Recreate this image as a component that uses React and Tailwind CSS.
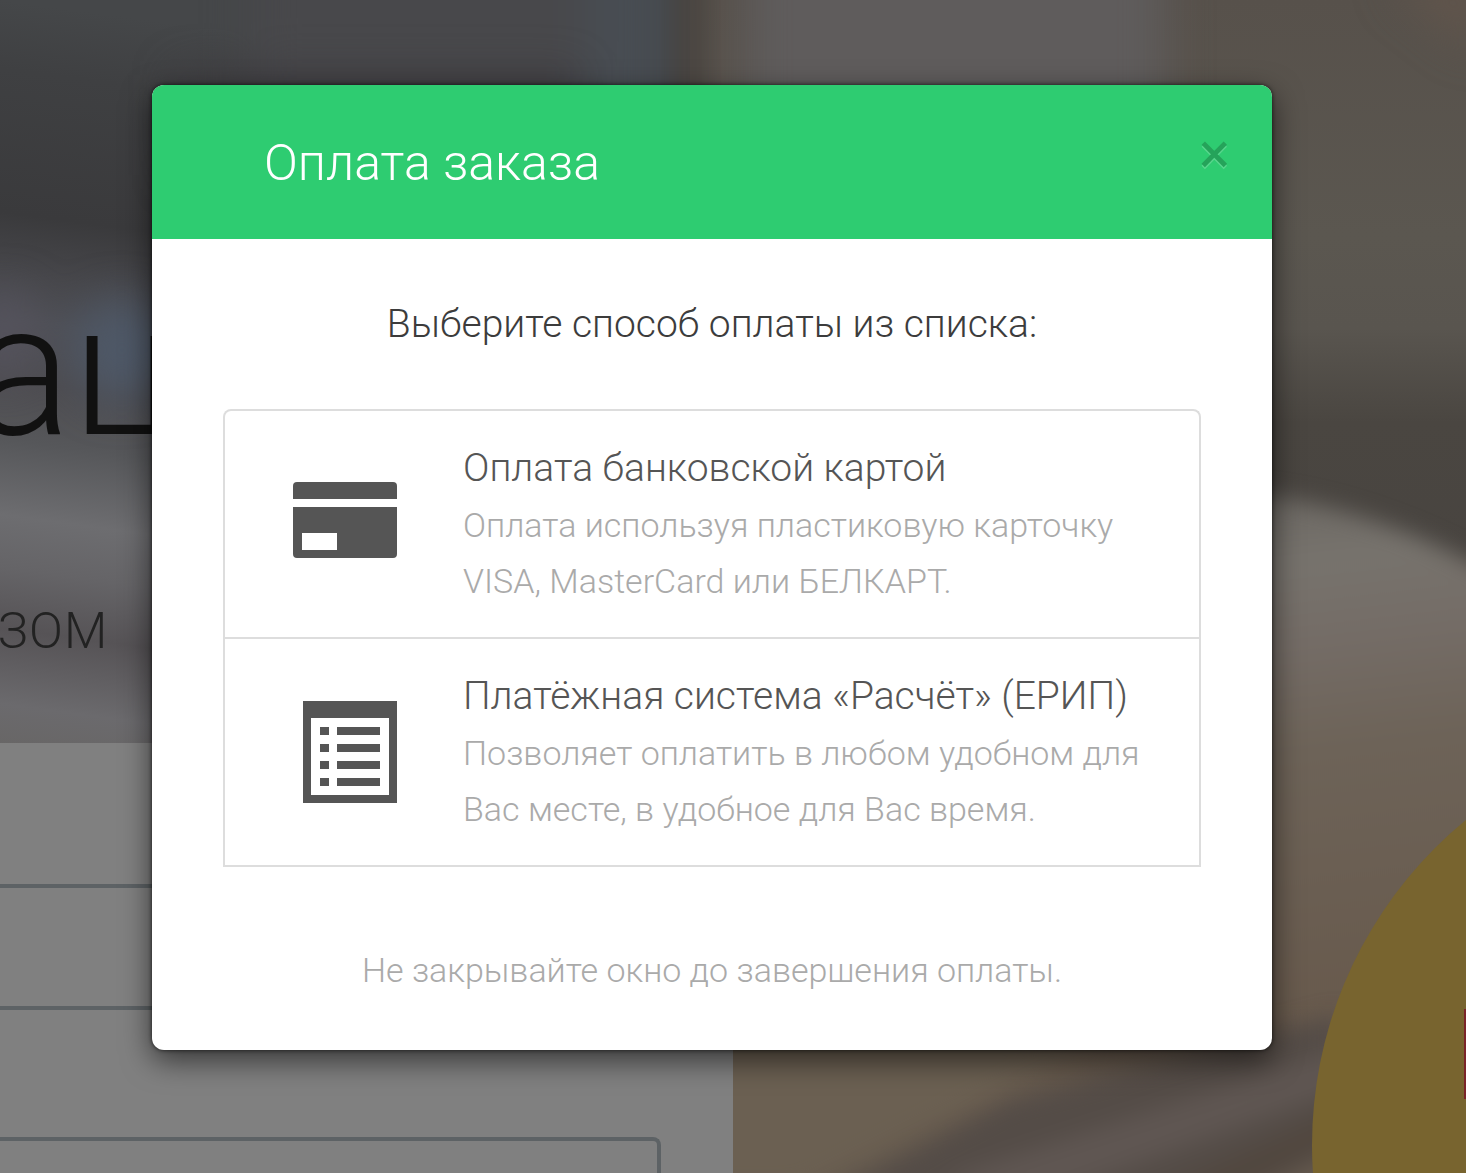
import React from 'react';

function Backdrop() {
  return (
    <svg
      aria-hidden="true"
      className="absolute inset-0 h-full w-full"
      viewBox="0 0 1466 1173"
      preserveAspectRatio="xMidYMid slice"
    >
      <defs>
        <filter id="soft" x="-50%" y="-50%" width="200%" height="200%" colorInterpolationFilters="sRGB">
          <feGaussianBlur stdDeviation="22" />
        </filter>
        <filter id="fine" x="-50%" y="-50%" width="200%" height="200%" colorInterpolationFilters="sRGB">
          <feGaussianBlur stdDeviation="11" />
        </filter>
        <linearGradient id="left" x1="0" y1="0" x2="-100" y2="743" gradientUnits="userSpaceOnUse">
          <stop offset="0" stopColor="#454749" />
          <stop offset="0.09" stopColor="#3f4042" />
          <stop offset="0.28" stopColor="#3a3a3c" />
          <stop offset="0.36" stopColor="#47474b" />
          <stop offset="0.42" stopColor="#4e4f55" />
          <stop offset="0.5" stopColor="#4d4c50" />
          <stop offset="0.58" stopColor="#56575a" />
          <stop offset="0.68" stopColor="#6d6d70" />
          <stop offset="0.75" stopColor="#656467" />
          <stop offset="0.83" stopColor="#565356" />
          <stop offset="0.93" stopColor="#6b6a6d" />
          <stop offset="1" stopColor="#676564" />
        </linearGradient>
        <linearGradient id="right" x1="0" y1="0" x2="0" y2="1173" gradientUnits="userSpaceOnUse">
          <stop offset="0" stopColor="#57514b" />
          <stop offset="0.2" stopColor="#5b5750" />
          <stop offset="0.28" stopColor="#59554f" />
          <stop offset="0.36" stopColor="#4a4641" />
          <stop offset="0.5" stopColor="#484440" />
          <stop offset="0.7" stopColor="#6c6256" />
          <stop offset="0.88" stopColor="#685a4d" />
          <stop offset="1" stopColor="#655a4e" />
        </linearGradient>
        <linearGradient id="cup" x1="1270" y1="490" x2="1330" y2="1010" gradientUnits="userSpaceOnUse">
          <stop offset="0" stopColor="#6a6661" />
          <stop offset="0.14" stopColor="#77736d" />
          <stop offset="0.3" stopColor="#746c66" />
          <stop offset="0.5" stopColor="#6d6358" />
          <stop offset="1" stopColor="#685a4d" />
        </linearGradient>
      </defs>
      <rect width="733" height="1173" fill="url(#left)" />
      <rect x="690" width="776" height="1173" fill="url(#right)" />
      <g filter="url(#soft)">
        <rect x="250" y="-60" width="360" height="130" fill="#48484b" />
        <rect x="180" y="75" width="420" height="100" fill="#3f3d41" />
        <rect x="585" y="-60" width="80" height="260" fill="#484d53" />
        <rect x="745" y="-60" width="420" height="260" fill="#5f5c5c" />
        <ellipse cx="122" cy="350" rx="48" ry="50" fill="#4e5867" />
        <ellipse cx="5" cy="335" rx="32" ry="44" fill="#55535d" />
        <path d="M1480 50V-20H1390Z" fill="#63564c" />
      </g>
      <rect x="676" y="-30" width="30" height="180" fill="#4a4541" filter="url(#fine)" />
      <path d="M1200 492Q1350 488 1520 590V1030H1200Z" fill="url(#cup)" filter="url(#fine)" />
      <g filter="url(#fine)">
        <path d="M700 1030H1120L800 1190H700Z" fill="#6b6052" />
        <path d="M820 1200L1010 1100L1340 1015V1200Z" fill="#544c47" />
        <path d="M940 1180L1340 1050V1090L1040 1200Z" fill="#5f5652" />
        <path d="M1140 1200L1340 1110V1140L1230 1200Z" fill="#51473f" />
        <path d="M1240 1200L1340 1150V1200Z" fill="#665a4e" />
      </g>
    </svg>
  );
}

function Page() {
  return (
    <div aria-hidden="true" className="relative grid min-h-screen grid-cols-2">
      <div className="flex flex-col">
        <div className="flex h-[743px] flex-col overflow-hidden whitespace-nowrap">
          <div className="-ml-7 mt-[256px] text-[186px] font-light leading-[228px] text-[#111]">ац</div>
          <div className="-ml-[2px] mt-[114px] text-[50px] font-light leading-[66px] tracking-wide text-[#222]">
            ЗОМ
          </div>
        </div>
        <div className="flex grow flex-col bg-[#808080] pr-[72px] pt-[141px]">
          <div className="h-[126px] border-y-4 border-[#5d6265]" />
          <div className="mt-[127px] h-9 rounded-tr-lg border-r-4 border-t-4 border-[#5d6265]" />
        </div>
      </div>
    </div>
  );
}

function CardIcon() {
  return (
    <svg viewBox="0 0 104 84" className="h-[84px] w-[104px]" fill="#555" aria-hidden="true">
      <path d="M4 0H100Q104 0 104 4V17H0V4Q0 0 4 0Z" />
      <path fillRule="evenodd" d="M0 25H104V72Q104 76 100 76H4Q0 76 0 72ZM9 51V68H44V51Z" />
    </svg>
  );
}

function ListIcon() {
  return (
    <svg viewBox="0 0 94 102" className="h-[102px] w-[94px]" fill="#555" aria-hidden="true">
      <path fillRule="evenodd" d="M0 0H94V102H0ZM8 17V94H86V17Z" />
      <path d="M17 26H26V34H17ZM34 26H77V34H34ZM17 43H26V51H17ZM34 43H77V51H34ZM17 60H26V68H17ZM34 60H77V68H34ZM17 77H26V85H17ZM34 77H77V85H34Z" />
    </svg>
  );
}

function Option({ icon, title, lines }) {
  return (
    <button
      type="button"
      className="flex w-full items-center gap-[66px] border-b-2 border-[#ddd] py-[28px] text-left"
    >
      <span className="flex w-[172px] shrink-0 justify-end">{icon}</span>
      <span className="block whitespace-nowrap">
        <span className="block text-[39px] leading-[58px] text-[#555]">{title}</span>
        {lines.map((line) => (
          <span key={line} className="block text-[34px] leading-[56px] text-[#aaa]">
            {line}
          </span>
        ))}
      </span>
    </button>
  );
}

export default function App() {
  return (
    <main className="relative min-h-screen overflow-hidden bg-[#58524d] font-[Roboto,sans-serif] font-light">
      <Backdrop />
      <Page />
      <div
        aria-hidden="true"
        className="absolute -right-[686px] top-[725px] h-[840px] w-[840px] rounded-full bg-[#78642f]"
      />
      <div aria-hidden="true" className="absolute right-0 top-[1009px] h-[90px] w-[2px] bg-[#7a2428]" />
      <div className="absolute inset-0 pl-[152px] pr-[194px] pt-[85px]">
        <section
          role="dialog"
          aria-labelledby="pay-title"
          className="overflow-hidden rounded-xl bg-white shadow-[0_10px_30px_rgba(0,0,0,0.6),0_0_4px_rgba(0,0,0,0.7)]"
        >
          <header className="flex items-start justify-between bg-[#2ecc71] pb-[44px] pl-[112px] pr-[42px] pt-[46px]">
            <h1 id="pay-title" className="text-[50px] leading-[64px] text-white">
              Оплата заказа
            </h1>
            <button
              type="button"
              aria-label="Закрыть"
              className="text-[58px] font-normal leading-[44px] text-[#25a35a] [text-shadow:0_2px_0_#58d68d]"
            >
              ×
            </button>
          </header>
          <div className="px-[71px] pb-[52px] pt-[57px] text-center">
            <p className="text-[39px] leading-[56px] text-[#3c3c3c]">Выберите способ оплаты из списка:</p>
            <div className="mt-[57px] rounded-t-lg border-x-2 border-t-2 border-[#ddd]">
              <Option
                icon={<CardIcon />}
                title="Оплата банковской картой"
                lines={['Оплата используя пластиковую карточку', 'VISA, MasterCard или БЕЛКАРТ.']}
              />
              <Option
                icon={<ListIcon />}
                title="Платёжная система «Расчёт» (ЕРИП)"
                lines={['Позволяет оплатить в любом удобном для', 'Вас месте, в удобное для Вас время.']}
              />
            </div>
            <p className="mt-[75px] text-[34px] leading-[56px] text-[#aaa]">Не закрывайте окно до завершения оплаты.</p>
          </div>
        </section>
      </div>
    </main>
  );
}
